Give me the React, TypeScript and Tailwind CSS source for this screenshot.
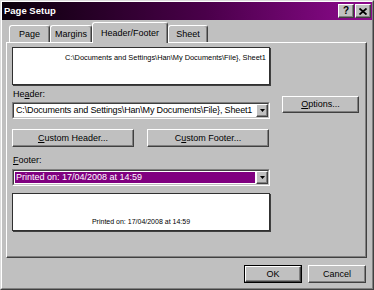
import React from "react";

const PATH = "C:\\Documents and Settings\\Han\\My Documents\\File}, Sheet1";

const raised =
  "border border-t-white border-l-white border-r-[#404040] border-b-[#404040] shadow-[inset_-1px_-1px_0_#808080] bg-[#c0c0c0]";

function Arrow() {
  return (
    <svg width="5" height="3" viewBox="0 0 5 3">
      <path d="M0 0H5L2.5 3Z" fill="#000" />
    </svg>
  );
}

function Combo({ children, selected }: { children: React.ReactNode; selected?: boolean }) {
  return (
    <div className="h-[17px] border border-t-[#808080] border-l-[#808080] border-r-white border-b-white">
      <div className="h-full flex bg-white border border-t-[#404040] border-l-[#404040] border-r-[#c0c0c0] border-b-[#c0c0c0]">
        <div className="flex-1 min-w-0 flex p-[1px]">
          <div
            className={
              selected
                ? "flex-1 min-w-0 bg-[#800080] text-white pl-[1px] leading-[11px] whitespace-nowrap overflow-hidden"
                : "flex-1 min-w-0 text-black pl-[1px] leading-[11px] tracking-[-0.15px] whitespace-nowrap overflow-hidden"
            }
          >
            {children}
          </div>
        </div>
        <div className={"w-[12px] h-full flex items-center justify-center " + raised}>
          <Arrow />
        </div>
      </div>
    </div>
  );
}

function Tab({ label, className, active }: { label: string; className: string; active?: boolean }) {
  return (
    <div
      className={
        (active
          ? "h-[21px] -mb-[1px] relative z-10 "
          : "h-[17px] ") +
        "flex items-center justify-center bg-[#c0c0c0] border-t border-l border-r border-t-white border-l-white border-r-[#404040] rounded-t-[3px] shadow-[inset_-1px_0_0_#808080] text-[9px] leading-[11px] text-black " +
        className
      }
    >
      {label}
    </div>
  );
}

export default function App() {
  return (
    <div className="w-[374px] h-[290px] bg-[#c0c0c0] border border-t-[#dcdcdc] border-l-[#dcdcdc] border-r-[#404040] border-b-[#404040] font-['Liberation_Sans',Arial,sans-serif] text-black overflow-hidden">
      <div className="h-full border border-t-white border-l-white border-r-[#808080] border-b-[#808080] flex flex-col">
        {/* Title bar */}
        <div className="h-[18px] bg-[linear-gradient(90deg,#0a000a,#4a004a_55%,#8e0a8e)] flex items-center pl-[2px] pr-[1px]">
          <span className="text-white font-bold text-[9.5px] leading-[12px] flex-1">Page Setup</span>
          <div className="flex gap-[1px]">
            <div className={"w-[16px] h-[14px] flex items-center justify-center " + raised}>
              <span className="font-bold text-[10px] leading-[10px]">?</span>
            </div>
            <div className={"w-[16px] h-[14px] flex items-center justify-center " + raised}>
              <svg width="8" height="7" viewBox="0 0 8 7">
                <path d="M0.5 0.5L7.5 6.5M7.5 0.5L0.5 6.5" stroke="#000" strokeWidth="1.8" />
              </svg>
            </div>
          </div>
        </div>

        {/* Tabs */}
        <div className="h-[21px] mt-[1px] flex items-end pl-[7px]">
          <Tab label="Page" className="w-[41px]" />
          <Tab label="Margins" className="w-[42px]" />
          <Tab label="Header/Footer" className="w-[76px]" active />
          <Tab label="Sheet" className="w-[40px]" />
        </div>

        {/* Panel */}
        <div className="ml-[4px] w-[361px] h-[216px] border border-t-white border-l-white border-r-[#404040] border-b-[#404040] shadow-[inset_-1px_-1px_0_#808080] flex text-[9px] leading-[11px]">
          <div className="ml-[5px] w-[258px] flex flex-col">
            <div className="mt-[4px] h-[38px] bg-white border border-[#303030] shadow-[1px_1px_0_#404040] text-[7.4px] leading-[9px] text-right pr-[3px] pt-[5px] whitespace-nowrap overflow-hidden">
              {PATH}
            </div>
            <div className="mt-[4px] h-[11px] pl-[1px]">
              He<span className="underline">a</span>der:
            </div>
            <div className="mt-[2px]">
              <Combo>{PATH}</Combo>
            </div>
            <div className="mt-[10px] flex gap-[13px]">
              <div className={"w-[122px] h-[18px] flex items-center justify-center " + raised}>
                <span>
                  <span className="underline">C</span>ustom Header...
                </span>
              </div>
              <div className={"w-[122px] h-[18px] flex items-center justify-center " + raised}>
                <span>
                  C<span className="underline">u</span>stom Footer...
                </span>
              </div>
            </div>
            <div className="mt-[8px] h-[11px] pl-[1px]">
              <span className="underline">F</span>ooter:
            </div>
            <div className="mt-[3px]">
              <Combo selected>Printed on: 17/04/2008 at 14:59</Combo>
            </div>
            <div className="mt-[7px] h-[38px] bg-white border border-[#303030] shadow-[1px_1px_0_#404040] text-[7px] leading-[9px] flex flex-col justify-end items-center pb-[4px] whitespace-nowrap">
              Printed on: 17/04/2008 at 14:59
            </div>
          </div>
          <div className="ml-[12px] mt-[53px]">
            <div className={"w-[77px] h-[17px] flex items-center justify-center " + raised}>
              <span>
                <span className="underline">O</span>ptions...
              </span>
            </div>
          </div>
        </div>

        {/* Bottom buttons */}
        <div className="mt-[7px] flex justify-end gap-[6px] pr-[6px] text-[9px] leading-[11px]">
          <div className="w-[58px] h-[18px] border border-black">
            <div className={"h-full flex items-center justify-center " + raised}>OK</div>
          </div>
          <div className={"w-[58px] h-[18px] flex items-center justify-center " + raised}>Cancel</div>
        </div>
      </div>
    </div>
  );
}
